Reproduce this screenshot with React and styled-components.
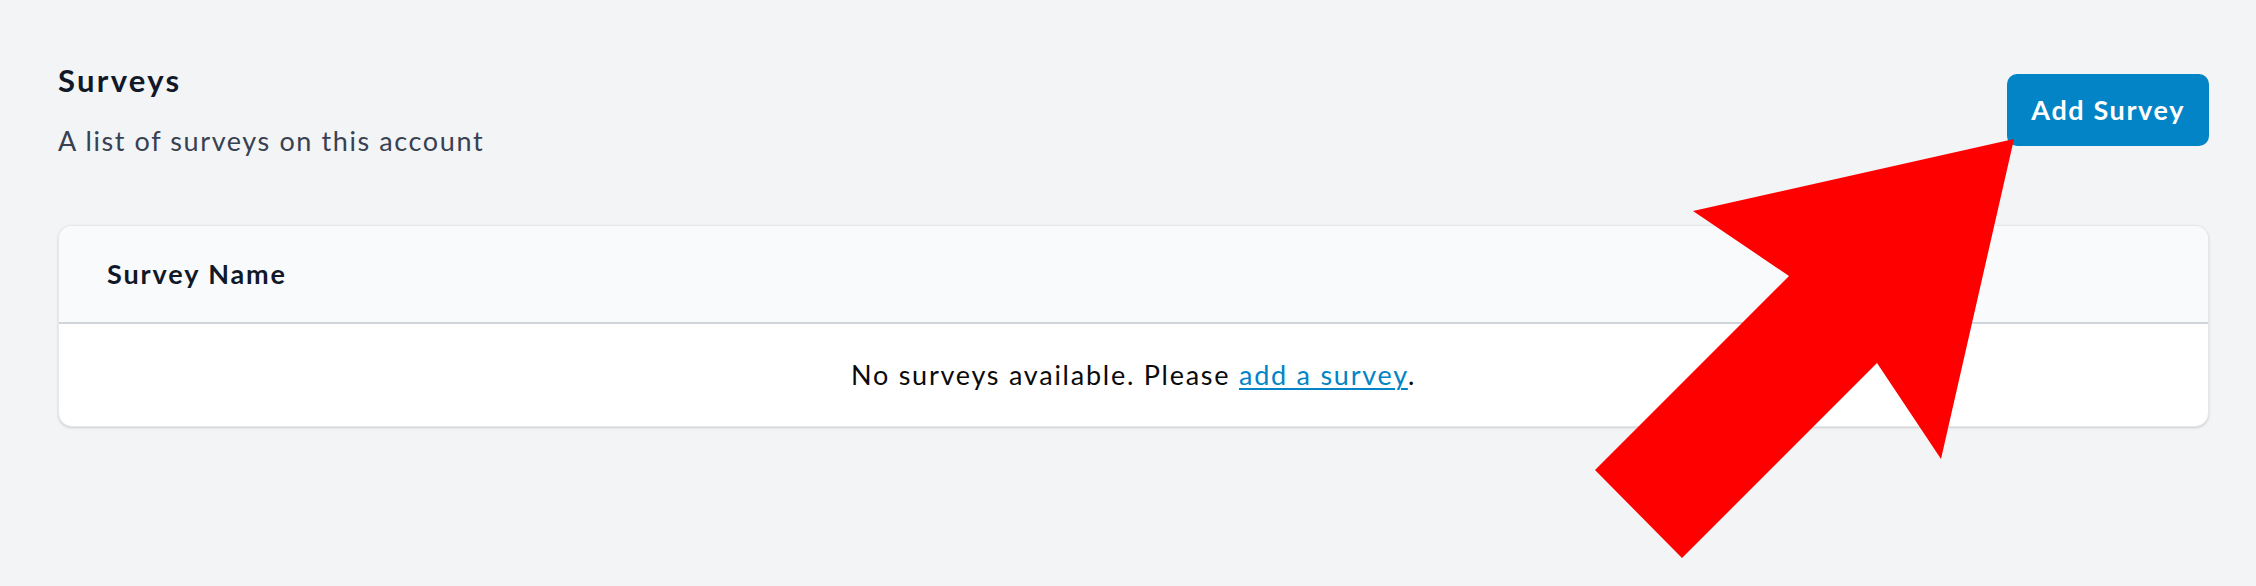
import styled, { createGlobalStyle } from "styled-components";

const GlobalStyle = createGlobalStyle`
  html, body {
    margin: 0;
    padding: 0;
    background: #f3f4f6;
    font-family: Lato, "Open Sans", sans-serif;
  }
  * {
    box-sizing: border-box;
  }
`;

const Page = styled.div`
  position: relative;
  min-height: 100vh;
  padding: 58px 47px 40px 58px;
`;

const TopBar = styled.div`
  display: flex;
  align-items: center;
  justify-content: space-between;
`;

const Title = styled.h1`
  margin: 0;
  font-size: 31px;
  line-height: 45px;
  font-weight: 700;
  color: #111827;
  letter-spacing: 2.3px;
`;

const Subtitle = styled.p`
  margin: 18px 0 0;
  font-size: 27px;
  line-height: 40px;
  color: #374151;
  letter-spacing: 1.6px;
`;

const Button = styled.button`
  border: none;
  border-radius: 10px;
  background: #0284c7;
  color: #fff;
  font-family: inherit;
  font-size: 27px;
  font-weight: 700;
  line-height: 40px;
  padding: 16px 24px;
  letter-spacing: 1.6px;
  cursor: pointer;
`;

const Card = styled.div`
  margin-top: 64px;
  background: #fff;
  border: 1px solid #e5e7eb;
  border-radius: 14px;
  overflow: hidden;
  box-shadow: 0 1px 3px rgba(0, 0, 0, 0.1), 0 1px 2px rgba(0, 0, 0, 0.06);
`;

const HeadRow = styled.div`
  background: #f9fafb;
  border-bottom: 2px solid #d1d5db;
  padding: 28px 48px;
`;

const HeadCell = styled.span`
  font-size: 27px;
  line-height: 40px;
  font-weight: 700;
  color: #111827;
  letter-spacing: 1.9px;
`;

const EmptyRow = styled.div`
  padding: 31px 48px;
  text-align: center;
  font-size: 27px;
  line-height: 40px;
  color: #0b0b0b;
  letter-spacing: 1.75px;
`;

const TextLink = styled.a`
  color: #0284c7;
  text-decoration: underline;
  text-decoration-thickness: 2px;
  text-underline-offset: 3px;
`;

const Arrow = styled.svg`
  position: absolute;
  left: 0;
  top: 0;
  pointer-events: none;
`;

export default function App() {
  return (
    <>
      <GlobalStyle />
      <Page>
        <TopBar>
          <div>
            <Title>Surveys</Title>
            <Subtitle>A list of surveys on this account</Subtitle>
          </div>
          <Button>Add Survey</Button>
        </TopBar>
        <Card>
          <HeadRow>
            <HeadCell>Survey Name</HeadCell>
          </HeadRow>
          <EmptyRow>
            No surveys available. Please <TextLink href="#">add a survey</TextLink>.
          </EmptyRow>
        </Card>
        <Arrow width="2256" height="586" viewBox="0 0 2256 586">
          <polygon
            points="2014,139 1941,459 1877,363 1682,558 1595,470 1789,276 1693,211"
            fill="#ff0000"
          />
        </Arrow>
      </Page>
    </>
  );
}
